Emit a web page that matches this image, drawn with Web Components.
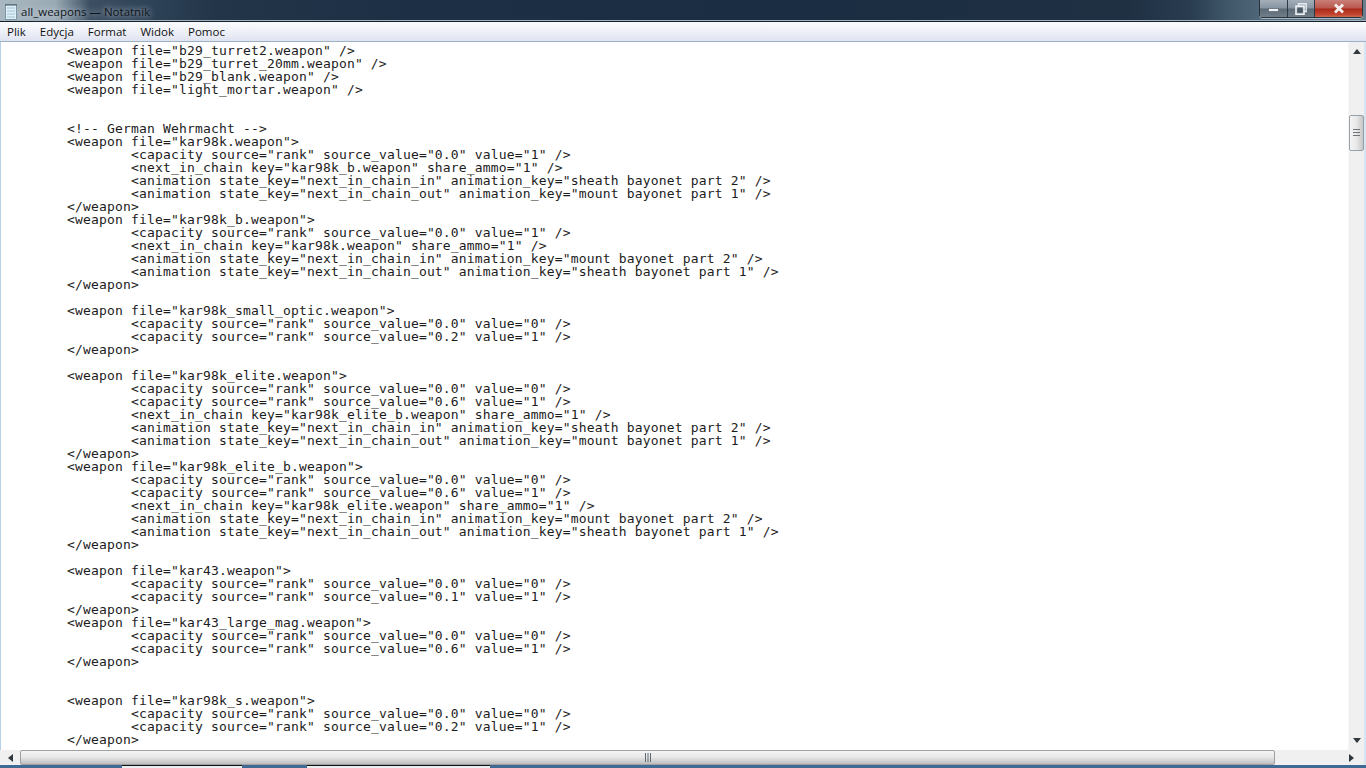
<!DOCTYPE html>
<html lang="pl"><head><meta charset="utf-8"><title>all_weapons — Notatnik</title>
<style>html,body{margin:0;height:100%;overflow:hidden;background:#1d3045}</style></head>
<body>
<np-window>
<np-titlebar slot="title">all_weapons — Notatnik</np-titlebar>
<np-menubar slot="menu"><np-menu>Plik</np-menu><np-menu>Edycja</np-menu><np-menu>Format</np-menu><np-menu>Widok</np-menu><np-menu>Pomoc</np-menu></np-menubar>
<np-editor slot="editor">	&lt;weapon file="b29_turret2.weapon" /&gt;
	&lt;weapon file="b29_turret_20mm.weapon" /&gt;
	&lt;weapon file="b29_blank.weapon" /&gt;
	&lt;weapon file="light_mortar.weapon" /&gt;


	&lt;!-- German Wehrmacht --&gt;
	&lt;weapon file="kar98k.weapon"&gt;
		&lt;capacity source="rank" source_value="0.0" value="1" /&gt;
		&lt;next_in_chain key="kar98k_b.weapon" share_ammo="1" /&gt;
		&lt;animation state_key="next_in_chain_in" animation_key="sheath bayonet part 2" /&gt;
		&lt;animation state_key="next_in_chain_out" animation_key="mount bayonet part 1" /&gt;
	&lt;/weapon&gt;
	&lt;weapon file="kar98k_b.weapon"&gt;
		&lt;capacity source="rank" source_value="0.0" value="1" /&gt;
		&lt;next_in_chain key="kar98k.weapon" share_ammo="1" /&gt;
		&lt;animation state_key="next_in_chain_in" animation_key="mount bayonet part 2" /&gt;
		&lt;animation state_key="next_in_chain_out" animation_key="sheath bayonet part 1" /&gt;
	&lt;/weapon&gt;

	&lt;weapon file="kar98k_small_optic.weapon"&gt;
		&lt;capacity source="rank" source_value="0.0" value="0" /&gt;
		&lt;capacity source="rank" source_value="0.2" value="1" /&gt;
	&lt;/weapon&gt;

	&lt;weapon file="kar98k_elite.weapon"&gt;
		&lt;capacity source="rank" source_value="0.0" value="0" /&gt;
		&lt;capacity source="rank" source_value="0.6" value="1" /&gt;
		&lt;next_in_chain key="kar98k_elite_b.weapon" share_ammo="1" /&gt;
		&lt;animation state_key="next_in_chain_in" animation_key="sheath bayonet part 2" /&gt;
		&lt;animation state_key="next_in_chain_out" animation_key="mount bayonet part 1" /&gt;
	&lt;/weapon&gt;
	&lt;weapon file="kar98k_elite_b.weapon"&gt;
		&lt;capacity source="rank" source_value="0.0" value="0" /&gt;
		&lt;capacity source="rank" source_value="0.6" value="1" /&gt;
		&lt;next_in_chain key="kar98k_elite.weapon" share_ammo="1" /&gt;
		&lt;animation state_key="next_in_chain_in" animation_key="mount bayonet part 2" /&gt;
		&lt;animation state_key="next_in_chain_out" animation_key="sheath bayonet part 1" /&gt;
	&lt;/weapon&gt;

	&lt;weapon file="kar43.weapon"&gt;
		&lt;capacity source="rank" source_value="0.0" value="0" /&gt;
		&lt;capacity source="rank" source_value="0.1" value="1" /&gt;
	&lt;/weapon&gt;
	&lt;weapon file="kar43_large_mag.weapon"&gt;
		&lt;capacity source="rank" source_value="0.0" value="0" /&gt;
		&lt;capacity source="rank" source_value="0.6" value="1" /&gt;
	&lt;/weapon&gt;


	&lt;weapon file="kar98k_s.weapon"&gt;
		&lt;capacity source="rank" source_value="0.0" value="0" /&gt;
		&lt;capacity source="rank" source_value="0.2" value="1" /&gt;
	&lt;/weapon&gt;</np-editor>
<np-vscroll slot="vscroll"></np-vscroll>
<np-hscroll slot="hscroll"></np-hscroll>
<np-taskstrip slot="strip"></np-taskstrip>
</np-window>
<script>
function def(name, html){
  customElements.define(name, class extends HTMLElement{
    constructor(){super();this.attachShadow({mode:'open'}).innerHTML=html;}
  });
}
def('np-window',`<style>
:host{display:grid;width:1366px;height:768px;grid-template-columns:1fr 18px;grid-template-rows:22px 20px 708px 15px 3px;background:#dbe8f4;overflow:hidden}
.t,.m,.st,.h{grid-column:1/3}
.e{min-width:0;min-height:0;padding-left:1px;background:#b9d1e8}
.v{min-height:0;background:#d6e5f2;display:flex;justify-content:flex-start}
.h{display:flex;min-width:0;padding:0 2px 0 0;background:#d6e5f2}
</style>
<div class="t"><slot name="title"></slot></div>
<div class="m"><slot name="menu"></slot></div>
<div class="e"><slot name="editor"></slot></div>
<div class="v"><slot name="vscroll"></slot></div>
<div class="h"><slot name="hscroll"></slot></div>
<div class="st"><slot name="strip"></slot></div>`);

def('np-titlebar',`<style>
:host{display:flex;height:22px;box-sizing:border-box;align-items:flex-start;border-bottom:1px solid #16202c;box-shadow:inset 0 -1px 0 #9fb0bf;
background:linear-gradient(90deg,#a9b8c0 0,#9aaab4 55px,#6d7f8e 72px,#3c4f62 90px,#2f4358 150px,#223549 215px,#1c2f44 420px,#1b2d42 800px,#1f3043 1130px,#2a3d50 1190px,#41586b 1230px,#4f6678 1260px,#6b7f8d 1366px)}
.ic{margin:3px 3px 0 4px;flex:none}
.tx{font:11.5px/20px "Open Sans","Noto Sans",sans-serif;color:#10161c;white-space:pre;flex:1;margin-top:2px;text-shadow:0 0 6px #dfe8ee}
.btns{display:flex;height:17px;flex:none;margin-right:3px;border:1px solid #27343f;border-top:0;border-radius:0 0 4px 4px;box-shadow:0 1px 0 #a5b5c3}
.b{display:flex;align-items:center;justify-content:center;box-sizing:border-box;border-right:1px solid #2c3a46;background:linear-gradient(#a3aeb8,#8795a2 48%,#5c6a76 52%,#6f7e8a)}
.mi{width:28px;padding-top:3px}.ma{width:27px}
.cl{width:47px;border-right:0;background:linear-gradient(#c97f78,#b9574d 48%,#a92a19 52%,#c4452f 85%,#c96a50)}
</style>
<svg class="ic" width="14" height="17" viewBox="0 0 14 17">
<path d="M1.5 1.5h11v15h-11z" fill="#dff0f7" stroke="#7d96a4"/>
<path d="M3 5h8M3 8h8M3 11h8M3 14h8" stroke="#9fc3d6"/>
<path d="M2 1v2M4 1v2M6 1v2M8 1v2M10 1v2M12 1v2" stroke="#3f5564"/>
</svg>
<span class="tx"><slot></slot></span>
<div class="btns">
<div class="b mi"><svg width="11" height="4" viewBox="0 0 11 4"><rect x=".5" y=".5" width="10" height="3" fill="#f0f3f6" stroke="#4b5864" stroke-width=".6"/></svg></div>
<div class="b ma"><svg width="12" height="12" viewBox="0 0 12 12"><path d="M3.5 3V.8h7.7v7.7H9" fill="none" stroke="#e6ebef" stroke-width="1.4"/><rect x="1" y="3.2" width="8" height="8" fill="none" stroke="#eef2f5" stroke-width="1.6"/><rect x="3.6" y="5.8" width="2.8" height="2.8" fill="none" stroke="#3e4b57"/></svg></div>
<div class="b cl"><svg width="12" height="11" viewBox="0 0 12 11"><path d="M2 1.5l8 8M10 1.5l-8 8" stroke="#f4efee" stroke-width="2.8"/></svg></div>
</div>`);

def('np-menubar',`<style>
:host{display:flex;height:20px;box-sizing:border-box;padding-left:7px;gap:14px;align-items:center;border-bottom:1px solid #9eb2c6;
background:linear-gradient(#fafbfd,#f1f3f9 40%,#dfe3f0)}
</style><slot></slot>`);
def('np-menu',`<style>:host{display:block;font:11.5px/18px "Open Sans","Noto Sans",sans-serif;color:#111}</style><slot></slot>`);

def('np-editor',`<style>
:host{display:block;height:708px;background:#fff;overflow:hidden}
pre{margin:0;padding:2px 0 0 2px;font:13px/13px "DejaVu Sans Mono","Liberation Mono",monospace;letter-spacing:.17px;color:#1c1c1c;tab-size:64px;white-space:pre}
</style><pre><slot></slot></pre>`);

def('np-vscroll',`<style>
:host{display:flex;flex-direction:column;width:16px;height:708px;box-sizing:border-box;background:#f0f0f0;align-items:center;border-left:1px solid #f6f6f6}
.a{display:flex;justify-content:center;align-items:center;height:18px;flex:none}
.thumb{margin-top:55px;width:15px;height:36px;flex:none;box-sizing:border-box;border:1px solid #97a0a6;border-radius:2px;background:linear-gradient(90deg,#f4f4f4,#e8e8e8 50%,#c6c6c6);display:flex;align-items:center;justify-content:center}
.sp{flex:1}
</style>
<div class="a"><svg width="8" height="5" viewBox="0 0 8 5"><path d="M0 5L4 0l4 5z" fill="#30373d"/></svg></div>
<div class="thumb"><svg width="7" height="8" viewBox="0 0 7 8"><path d="M0 .5h7M0 3.5h7M0 6.5h7" stroke="#6e767c"/></svg></div>
<div class="sp"></div>
<div class="a" style="margin-bottom:1px"><svg width="8" height="5" viewBox="0 0 8 5"><path d="M0 0h8L4 5z" fill="#30373d"/></svg></div>`);

def('np-hscroll',`<style>
:host{display:flex;flex:1;min-width:0;height:15px;background:#f0f0f0;align-items:stretch}
.a{display:flex;align-items:center;justify-content:center;flex:none;width:20px}
.thumb{width:1255px;flex:none;box-sizing:border-box;border:1px solid #a0a0a0;border-radius:2px;background:linear-gradient(#f6f6f6,#e6e6e6 50%,#bdbdbd);display:flex;align-items:center;justify-content:center}
.sp{flex:1}
.a.r{width:25px}
</style>
<div class="a"><svg width="5" height="8" viewBox="0 0 5 8"><path d="M5 0L0 4l5 4z" fill="#30373d"/></svg></div>
<div class="thumb"><svg width="8" height="9" viewBox="0 0 8 9"><path d="M1.5 0v9M4 0v9M6.5 0v9" stroke="#5f6a70"/></svg></div>
<div class="sp"></div>
<div class="a r"><svg width="5" height="8" viewBox="0 0 5 8"><path d="M0 0l5 4-5 4z" fill="#30373d"/></svg></div>`);

def('np-taskstrip',`<style>
:host{display:flex;height:3px;background:#3f6a94;padding-left:122px;gap:65px}
i{display:block;height:3px;background:#e8eef2;border-top:1px solid #111;box-sizing:border-box}
</style><i style="width:120px"></i><i style="width:183px"></i>`);
</script>
</body></html>
